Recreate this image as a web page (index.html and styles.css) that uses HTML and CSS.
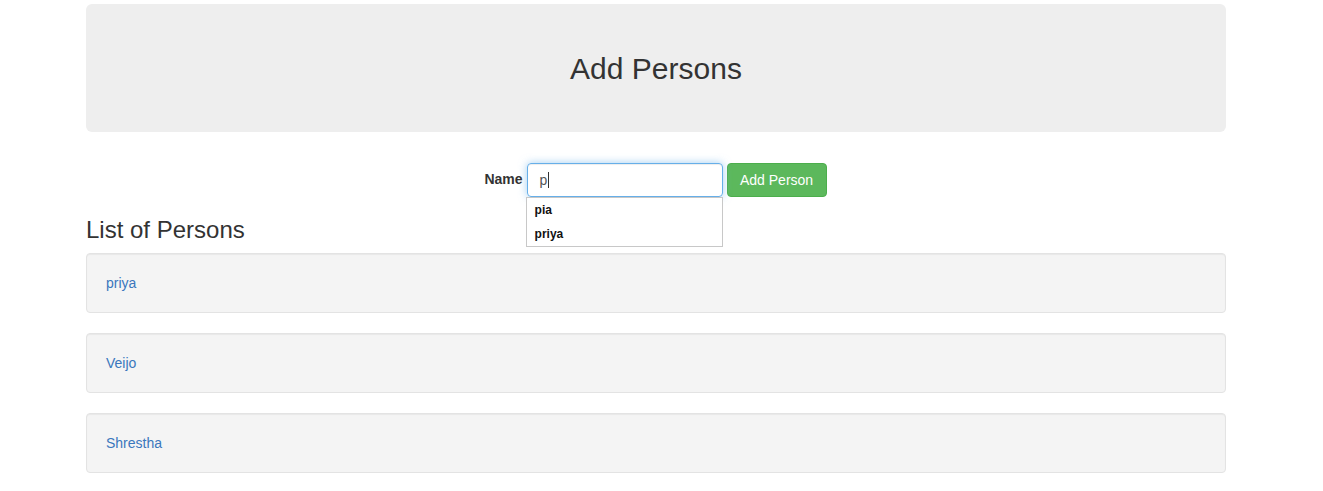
FILE: index.html
```html
<!DOCTYPE html>
<html>
<head>
<meta charset="utf-8">
<title>Add Persons</title>
<link rel="stylesheet" href="styles.css">
</head>
<body>
<div class="container">
  <div class="jumbotron">
    <h1 class="title">Add Persons</h1>
  </div>
  <form class="person-form">
    <label class="label" for="name">Name</label>
    <div class="input-wrap">
      <div class="input"><span class="input-text">p</span><span class="caret"></span></div>
      <ul class="suggestions">
        <li class="suggestion">pia</li>
        <li class="suggestion">priya</li>
      </ul>
    </div>
    <button type="button" class="btn">Add Person</button>
  </form>
  <h3 class="list-title">List of Persons</h3>
  <div class="well"><a class="person-link" href="#">priya</a></div>
  <div class="well"><a class="person-link" href="#">Veijo</a></div>
  <div class="well"><a class="person-link" href="#">Shrestha</a></div>
</div>
</body>
</html>
```

FILE: styles.css
```css
* { box-sizing: border-box; }
html, body {
  margin: 0;
  padding: 0;
  background: #fff;
  font-family: "Liberation Sans", Arial, sans-serif;
  font-size: 14px;
  line-height: 1.42857;
  color: #333;
}
.container {
  width: 1140px;
  margin-left: 86px;
  padding-top: 4px;
}
.jumbotron {
  background: #eee;
  border-radius: 6px;
  height: 128px;
  display: flex;
  align-items: center;
  justify-content: center;
  margin-bottom: 31px;
}
.title {
  margin: 0;
  font-size: 30px;
  font-weight: 400;
  line-height: 1.1;
  color: #333;
}
.person-form {
  display: flex;
  justify-content: center;
  align-items: center;
  height: 34px;
  margin: 0;
  padding-right: 2px;
}
.label {
  font-weight: 700;
  margin-right: 4px;
  padding-left: 1px;
}
.input-wrap {
  position: relative;
  width: 196px;
  height: 34px;
}
.input {
  height: 34px;
  width: 196px;
  border: 1px solid #66afe9;
  border-radius: 4px;
  padding: 6px 12px;
  color: #555;
  font-size: 14px;
  line-height: 20px;
  box-shadow: inset 0 1px 1px rgba(0,0,0,.075), 0 0 8px rgba(102,175,233,.6);
  display: flex;
  align-items: center;
}
.caret {
  display: inline-block;
  width: 1px;
  height: 16px;
  background: #333;
  margin-left: 1px;
}
.suggestions {
  position: absolute;
  top: 34px;
  left: -1px;
  width: 197px;
  margin: 0;
  padding: 0;
  list-style: none;
  background: #fff;
  border: 1px solid #c8c8c8;
  font-family: "Liberation Sans", Arial, sans-serif;
  font-weight: 700;
  font-size: 12px;
  color: #111;
}
.suggestion {
  height: 24px;
  line-height: 24px;
  padding-left: 8px;
}
.btn {
  margin-left: 4px;
  height: 34px;
  width: 100px;
  padding: 6px 10px;
  background: #5cb85c;
  border: 1px solid #4cae4c;
  border-radius: 4px;
  color: #fff;
  font-family: "Liberation Sans", Arial, sans-serif;
  font-size: 14px;
  line-height: 20px;
}
.list-title {
  margin: 20px 0 10px;
  font-size: 24px;
  font-weight: 400;
  line-height: 1.1;
  color: #333;
}
.well {
  height: 60px;
  padding: 20px 19px 18px;
  margin-bottom: 20px;
  background: #f4f4f4;
  border: 1px solid #e3e3e3;
  border-radius: 4px;
  box-shadow: inset 0 1px 1px rgba(0,0,0,.05);
}
.person-link {
  color: #3a77bd;
  text-decoration: none;
}
```
